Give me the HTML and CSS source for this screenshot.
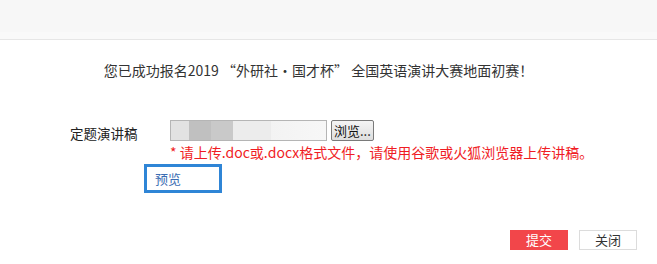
FILE: index.html
```html
<!DOCTYPE html>
<html lang="zh">
<head>
<meta charset="utf-8">
<link rel="stylesheet" href="styles.css">
</head>
<body>
<div class="top"></div>
<div class="band"></div>
<div class="content">
  <p class="headline">您已成功报名2019 “外研社·国才杯” 全国英语演讲大赛地面初赛！</p>
  <div class="form-row">
    <span class="label">定题演讲稿</span>
    <div class="field">
      <div class="file-line">
        <span class="file-box"></span>
        <span class="browse">浏览...</span>
      </div>
      <p class="hint">* 请上传.doc或.docx格式文件，请使用谷歌或火狐浏览器上传讲稿。</p>
    </div>
  </div>
  <div class="preview"><span>预览</span></div>
  <div class="actions">
    <span class="btn btn-submit">提交</span>
    <span class="btn btn-close">关闭</span>
  </div>
</div>
</body>
</html>
```
FILE: styles.css
```css
html, body {
  margin: 0;
  padding: 0;
  background: #ffffff;
  font-family: "Noto Sans CJK SC", "Noto Sans", sans-serif;
  color: #333333;
}
.top {
  height: 32px;
  background: #f7f7f7;
}
.band {
  height: 7px;
  background: #f9f9f9;
  border-bottom: 1px solid #e6e6e6;
}
.content {
  display: flex;
  flex-direction: column;
}
.headline {
  margin: 19px 0 0 0;
  text-align: center;
  font-size: 14px;
  line-height: 22px;
  color: #333333;
  padding-right: 20px;
}
.form-row {
  display: flex;
  margin-top: 39px;
  padding-left: 70px;
}
.label {
  width: 100px;
  font-size: 13.5px;
  line-height: 21px;
  margin-top: 3px;
  color: #222222;
}
.field {
  display: flex;
  flex-direction: column;
}
.file-line {
  display: flex;
  align-items: center;
  gap: 4px;
}
.file-box {
  width: 155px;
  height: 19px;
  border: 1px solid #b5b5b5;
  background: linear-gradient(90deg,
    #e2e2e2 0, #e2e2e2 18px,
    #c0c0c0 18px, #c0c0c0 40px,
    #c9c9c9 40px, #c9c9c9 62px,
    #ececec 62px, #ececec 100px,
    #f3f3f3 100px, #f7f7f7 155px);
}
.browse {
  height: 19px;
  padding: 0 2px;
  border: 1px solid #7a7a7a;
  border-radius: 2px;
  background: linear-gradient(#f4f4f4, #dedede);
  font-size: 13px;
  line-height: 19px;
  color: #111111;
}
.hint {
  margin: 1px 0 0 0;
  font-size: 14px;
  line-height: 20px;
  color: #f01c24;
}
.preview {
  margin: 2px 0 0 144px;
  width: 72px;
  height: 23px;
  border: 3px solid #2f85d6;
  font-size: 13px;
  line-height: 23px;
  color: #3b6db3;
}
.preview span {
  margin-left: 8px;
}
.actions {
  display: flex;
  justify-content: flex-end;
  gap: 11px;
  margin-top: 37px;
  padding-right: 20px;
}
.btn {
  width: 56px;
  height: 18px;
  font-size: 13px;
  line-height: 18px;
  text-align: center;
  box-sizing: content-box;
}
.btn-submit {
  background: #f2464a;
  color: #ffffff;
  border: 1px solid #f2464a;
}
.btn-close {
  background: #ffffff;
  color: #333333;
  border: 1px solid #dcdcdc;
}
```
